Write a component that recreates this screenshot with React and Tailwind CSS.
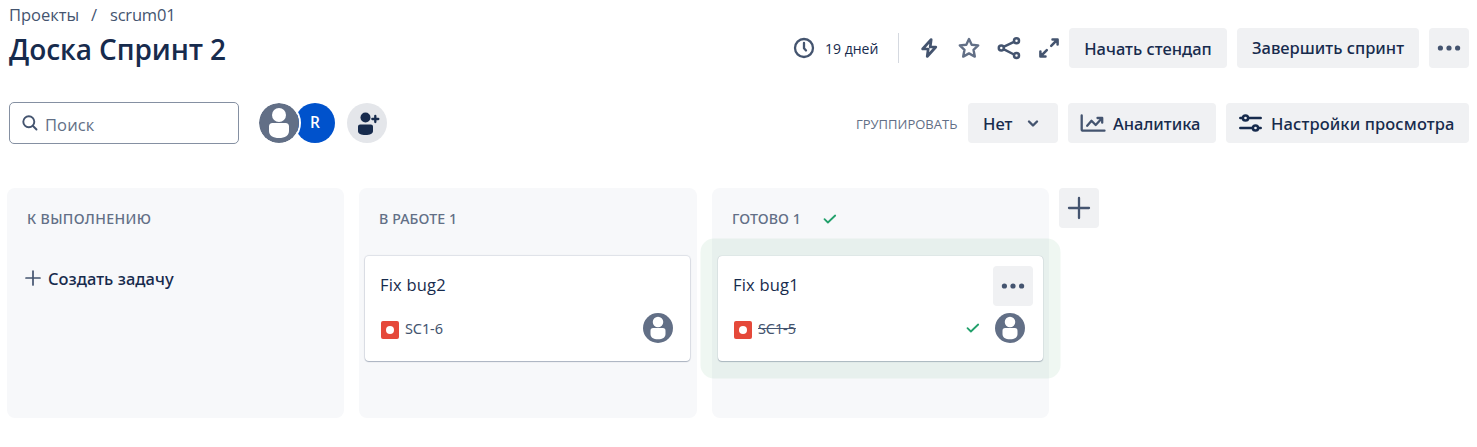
import React from "react";

function Avatar({ className }) {
  return (
    <svg viewBox="0 0 40 40" className={className}>
      <circle cx="20" cy="20" r="20" fill="#626f86" />
      <circle cx="20" cy="12" r="7" fill="#fff" />
      <path d="M10 23.500a3.500 3.500 0 0 1 3.500-3.500h13a3.500 3.500 0 0 1 3.500 3.500V28c0 4.500-4 7-10 7s-10-2.500-10-7z" fill="#fff" />
    </svg>
  );
}

function Dots() {
  return (
    <svg viewBox="0 0 24 8" className="h-2 w-6 shrink-0 fill-[#44546f]">
      <circle cx="3.400" cy="4" r="2.600" />
      <circle cx="12" cy="4" r="2.600" />
      <circle cx="20.600" cy="4" r="2.600" />
    </svg>
  );
}

function Check({ className }) {
  return (
    <svg viewBox="0 0 14 10" className={className} fill="none" stroke="#22a06b" strokeWidth="1.800" strokeLinecap="round" strokeLinejoin="round">
      <path d="M1.500 5.200 4.900 8.500 12.200 1.500" />
    </svg>
  );
}

function BugIcon() {
  return (
    <svg viewBox="0 0 18 18" className="mt-[3px] size-[18px] shrink-0">
      <rect width="18" height="18" rx="2" fill="#e5493a" />
      <circle cx="9" cy="9" r="4" fill="#fff" />
    </svg>
  );
}

function Button({ className, children }) {
  return (
    <button className={`flex h-10 shrink-0 items-center rounded bg-[#f0f1f3] font-['Noto_Sans','Open_Sans',sans-serif] text-[16.5px] font-medium whitespace-nowrap text-[#172b4d] ${className}`}>
      {children}
    </button>
  );
}

function Breadcrumbs() {
  return (
    <nav className="flex h-[22px] items-center pl-[9px] text-[16.5px] leading-[22px] text-[#44546f]">
      <span className="w-[82px]">Проекты</span>
      <span className="w-[19px]">/</span>
      <span className="tracking-[-0.2px]">scrum01</span>
    </nav>
  );
}

function Header() {
  return (
    <header className="mt-[2px] flex h-10 items-center pr-2 pl-[9px]">
      <h1 className="mt-[2px] text-[28px] leading-10 font-semibold tracking-[-0.1px] whitespace-nowrap text-[#172b4d]">Доска Спринт 2</h1>
      <div className="ml-auto flex items-center">
        <svg viewBox="0 0 22 22" className="mr-[10px] size-[22px]" fill="none" stroke="#44546f" strokeWidth="2.300" strokeLinecap="round" strokeLinejoin="round">
          <circle cx="11" cy="11" r="9" />
          <path d="M11 6v5.300l2 2.200" />
        </svg>
        <span className="w-[54px] text-[14px] whitespace-nowrap text-[#172b4d]">19 дней</span>
        <span className="mr-5 ml-[19px] h-[30px] w-px bg-[#d5d9e0]" />
        <svg viewBox="0 0 22 24" className="h-6 w-[22px]" fill="none" stroke="#44546f" strokeWidth="2.700" strokeLinejoin="round">
          <path d="M12.200 3.500 3.600 13h5.600L8.200 20.500l8.600-9.500h-5.600z" />
        </svg>
        <svg viewBox="0 0 24 24" className="ml-[16px] size-6" fill="none" stroke="#626f86" strokeWidth="2.400" strokeLinejoin="round">
          <path d="m12 3 2.700 5.700 6.500.7-4.700 4.400 1.300 6.800-5.800-3.200-5.800 3.200 1.300-6.800-4.700-4.400 6.500-.7z" />
        </svg>
        <svg viewBox="0 0 24 24" className="ml-[16px] size-6" fill="none" stroke="#44546f" strokeWidth="2.500">
          <path d="M6.500 10.800 17 5.800M6.500 13.200 17 18.500" />
          <circle cx="4.300" cy="12" r="2.500" />
          <circle cx="19.500" cy="4.700" r="2.500" />
          <circle cx="19.500" cy="19.500" r="2.500" />
        </svg>
        <svg viewBox="0 0 22 22" className="mr-[9px] ml-[17px] size-[22px]" fill="none" stroke="#44546f" strokeWidth="2.500" strokeLinejoin="round" strokeLinecap="round">
          <path d="M14.500 2.400h5.100v5.100M19 3l-5.800 5.800M7.500 19.600H2.400v-5.100M3 19l5.800-5.800" />
        </svg>
        <Button className="mr-[10px] w-[158px] justify-center pt-[3px]">Начать стендап</Button>
        <Button className="mr-[10px] w-[182px] justify-center pt-px">Завершить спринт</Button>
        <Button className="w-10 justify-center">
          <Dots />
        </Button>
      </div>
    </header>
  );
}

function Toolbar() {
  return (
    <section className="mt-[34px] flex h-[42px] items-center pr-2 pl-[9px]">
      <label className="flex h-[42px] w-[230px] items-center rounded-[5px] border border-[#8590a2] bg-white pl-3">
        <svg viewBox="0 0 16 16" className="size-4" fill="none" stroke="#44546f" strokeWidth="1.900" strokeLinecap="round">
          <circle cx="6.800" cy="6.800" r="5.500" />
          <path d="m11 11 3.500 3.500" />
        </svg>
        <span className="mt-[4px] ml-[7px] text-[16.5px] tracking-[0.1px] text-[#626f86]">Поиск</span>
      </label>
      <div className="ml-5 flex items-center">
        <Avatar className="z-10 -mr-1 size-10 rounded-full shadow-[0_0_0_2px_#fff]" />
        <span className="flex size-10 items-center justify-center rounded-full bg-[#0052cc] text-[15.5px] font-semibold text-white">R</span>
        <button className="ml-3 flex size-10 items-center justify-center rounded-full bg-[#e4e6ea]">
          <svg viewBox="0 0 24 24" className="-mt-px ml-px size-6" fill="#172b4d">
            <circle cx="9.500" cy="6.500" r="5" />
            <path d="M2 15.600A2.100 2.100 0 0 1 4.100 13.500H14.900a2.100 2.100 0 0 1 2.100 2.100V20c0 2.700-3 4-7.500 4S2 22.700 2 20z" />
            <path d="M19.300 5v6M16.300 8h6" stroke="#172b4d" strokeWidth="2.300" strokeLinecap="round" />
          </svg>
        </button>
      </div>
      <div className="ml-auto flex items-center">
        <span className="mt-[3px] w-[112px] text-[13px] whitespace-nowrap text-[#626f86]">ГРУППИРОВАТЬ</span>
        <Button className="mr-[10px] w-[90px] pt-[2px] pl-[15px]">
          <span className="w-[43px] text-left">Нет</span>
          <svg viewBox="0 0 14 10" className="h-[10px] w-[14px]" fill="none" stroke="#44546f" strokeWidth="2.400" strokeLinecap="round" strokeLinejoin="round">
            <path d="m3 2.500 4 4 4-4" />
          </svg>
        </Button>
        <Button className="mr-[10px] w-[148px] pt-[2px] pl-3">
          <svg viewBox="0 0 26 20" className="-mt-[2px] mr-[7px] h-5 w-[26px] shrink-0" fill="none" stroke="#44546f" strokeWidth="2.300" strokeLinecap="round" strokeLinejoin="round">
            <path d="M1.700 2.500v13.700a1.500 1.500 0 0 0 1.500 1.500h21.300" />
            <path d="m7.200 12.800 4.300-5 4.200 4.200 5.800-6.300M17.500 5h4.700v4.700" />
          </svg>
          Аналитика
        </Button>
        <Button className="w-[243px] pt-[2px] pl-[13px] tracking-[0.12px]">
          <svg viewBox="0 0 23 20" className="-mt-[2px] mr-[9px] h-5 w-[23px] shrink-0" fill="none" stroke="#172b4d" strokeWidth="2.500" strokeLinecap="round">
            <path d="M1.300 5h2.200M9.500 5H21.700M1.300 15h12.200M19.500 15h2.200" />
            <circle cx="6.500" cy="5" r="2.600" />
            <circle cx="16.500" cy="15" r="2.600" />
          </svg>
          Настройки просмотра
        </Button>
      </div>
    </section>
  );
}

function Card({ title, issue, done, className }) {
  return (
    <article className={`mt-[22px] flex h-[105px] flex-col rounded-[4px] bg-white ${className}`}>
      <div className="flex h-[50px] items-start justify-between pt-[10px] pr-[10px] pl-[15px]">
        <span className="pt-[7px] text-[16.5px] leading-6 tracking-[0.2px] text-[#172b4d]">{title}</span>
        {done && (
          <Button className="w-10 justify-center">
            <Dots />
          </Button>
        )}
      </div>
      <div className={`flex h-[44px] items-center pl-4 ${done ? "pr-[18px]" : "pr-[17px]"}`}>
        <BugIcon />
        <span className={`mt-px ml-[6px] font-['Noto_Sans','Open_Sans',sans-serif] text-[14.5px] font-[450] tracking-[-0.1px] text-[#44546f] ${done ? "line-through" : ""}`}>{issue}</span>
        {done && <Check className="mr-[15px] ml-auto h-[10px] w-[14px]" />}
        <Avatar className={done ? "size-[30px]" : "ml-auto size-[30px]"} />
      </div>
    </article>
  );
}

function Column({ title, done, className, titleClassName, children }) {
  return (
    <section className={`h-[230px] shrink-0 rounded-lg bg-[#f7f8fa] pt-[16px] ${className}`}>
      <h2 className={`flex h-[30px] items-center pl-5 font-['Noto_Sans','Open_Sans',sans-serif] text-[14.2px] font-medium text-[#626f86] ${titleClassName}`}>
        {title}
        {done && <Check className="ml-[22px] h-[10px] w-[14px]" />}
      </h2>
      {children}
    </section>
  );
}

export default function App() {
  return (
    <main className="h-[447px] w-[1477px] overflow-hidden bg-white pt-1 font-['Open_Sans','Noto_Sans',sans-serif]">
      <Breadcrumbs />
      <Header />
      <Toolbar />
      <div className="mt-[44px] flex items-start pl-[7px]">
        <Column title="К ВЫПОЛНЕНИЮ" titleClassName="tracking-[0.35px]" className="mr-[15px] w-[337px]">
          <button className="mt-[33px] ml-[18px] flex h-6 items-center font-['Noto_Sans','Open_Sans',sans-serif] text-[16.5px] font-medium tracking-[0.03px] text-[#172b4d]">
            <svg viewBox="0 0 16 16" className="-mt-[2px] mr-[7px] size-4" stroke="#44546f" strokeWidth="1.700" strokeLinecap="round">
              <path d="M8 1v14M1 8h14" />
            </svg>
            Создать задачу
          </button>
        </Column>
        <Column title="В РАБОТЕ 1" titleClassName="tracking-[0.1px]" className="mr-[15px] w-[338px]">
          <Card title="Fix bug2" issue="SC1-6" className="mr-[7px] ml-[6px] shadow-[0_1px_1px_rgba(9,30,66,0.25),0_0_1px_1px_rgba(9,30,66,0.1)]" />
        </Column>
        <Column title="ГОТОВО 1" titleClassName="tracking-[0.1px]" done className="mr-[10px] w-[337px]">
          <Card title="Fix bug1" issue="SC1-5" done className="mx-[6px] shadow-[0_1px_1px_rgba(9,30,66,0.25),0_0_1px_rgba(9,30,66,0.31),0_0_0_17.5px_rgba(31,142,70,0.07)]" />
        </Column>
        <Button className="w-10 justify-center">
          <svg viewBox="0 0 24 24" className="size-6" stroke="#44546f" strokeWidth="2.300" strokeLinecap="round">
            <path d="M12 2v20M2 12h20" />
          </svg>
        </Button>
      </div>
    </main>
  );
}
